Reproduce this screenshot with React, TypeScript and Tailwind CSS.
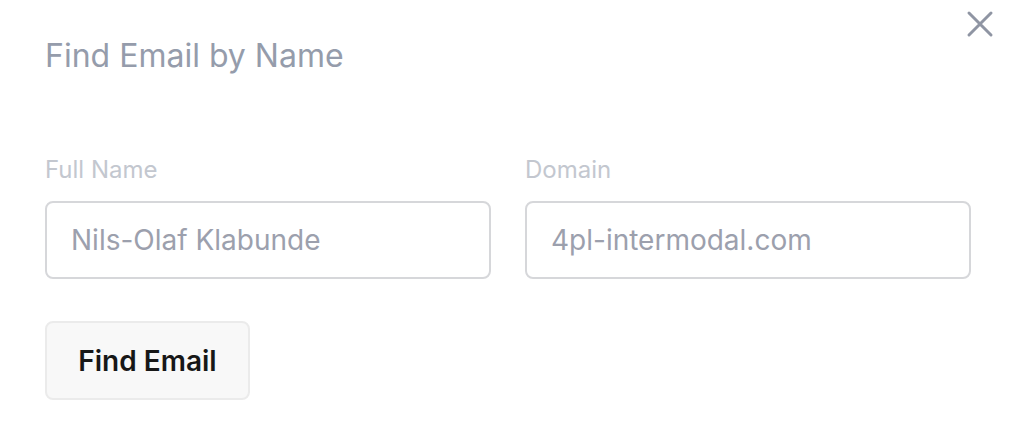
import React from "react";

const Field = ({ label, placeholder }: { label: string; placeholder: string }) => (
  <div className="flex flex-1 flex-col gap-[15px]">
    <label className="text-[24px] leading-[32px] text-[#c3c7cf]">{label}</label>
    <input
      className="h-[78px] w-full rounded-[8px] border-2 border-[#d6d7da] bg-white px-[24px] text-[28px] text-[#111827] outline-none placeholder:text-[#9ca0ad]"
      placeholder={placeholder}
    />
  </div>
);

export default function App() {
  return (
    <div className="relative h-[428px] w-[1016px] bg-white font-['Inter',sans-serif]">
      <button className="absolute left-[966px] top-[10px] text-[#8f95a3]">
        <svg width="28" height="28" viewBox="0 0 28 28" fill="none" stroke="currentColor" strokeWidth="3" strokeLinecap="round">
          <path d="M3 3L25 25M25 3L3 25" />
        </svg>
      </button>
      <div className="flex flex-col px-[45px] pt-[36px]">
        <h2 className="text-[32px] leading-[40px] text-[#959cab]">Find Email by Name</h2>
        <div className="mt-[78px] flex gap-[34px]">
          <Field label="Full Name" placeholder="Nils-Olaf Klabunde" />
          <Field label="Domain" placeholder="4pl-intermodal.com" />
        </div>
        <div className="mt-[42px]">
          <button className="h-[79px] w-[205px] rounded-[8px] border-2 border-[#ebebeb] bg-[#f8f8f8] text-[28px] font-semibold text-[#171717]">
            Find Email
          </button>
        </div>
      </div>
    </div>
  );
}
